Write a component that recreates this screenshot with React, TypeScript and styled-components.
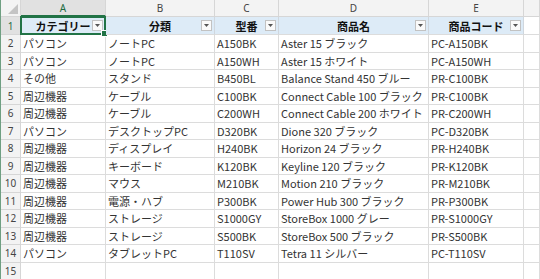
import styled, { createGlobalStyle } from 'styled-components';

const GlobalStyle = createGlobalStyle`
  html, body {
    margin: 0;
    padding: 0;
    background: #ffffff;
    overflow: hidden;
  }
`;

const columns = ['A', 'B', 'C', 'D', 'E', ''];
const headers = ['カテゴリー', '分類', '型番', '商品名', '商品コード'];

const rows: string[][] = [
  ['パソコン', 'ノートPC', 'A150BK', 'Aster 15 ブラック', 'PC-A150BK'],
  ['パソコン', 'ノートPC', 'A150WH', 'Aster 15 ホワイト', 'PC-A150WH'],
  ['その他', 'スタンド', 'B450BL', 'Balance Stand 450 ブルー', 'PR-C100BK'],
  ['周辺機器', 'ケーブル', 'C100BK', 'Connect Cable 100 ブラック', 'PR-C100BK'],
  ['周辺機器', 'ケーブル', 'C200WH', 'Connect Cable 200 ホワイト', 'PR-C200WH'],
  ['パソコン', 'デスクトップPC', 'D320BK', 'Dione 320 ブラック', 'PC-D320BK'],
  ['周辺機器', 'ディスプレイ', 'H240BK', 'Horizon 24 ブラック', 'PR-H240BK'],
  ['周辺機器', 'キーボード', 'K120BK', 'Keyline 120 ブラック', 'PR-K120BK'],
  ['周辺機器', 'マウス', 'M210BK', 'Motion 210 ブラック', 'PR-M210BK'],
  ['周辺機器', '電源・ハブ', 'P300BK', 'Power Hub 300 ブラック', 'PR-P300BK'],
  ['周辺機器', 'ストレージ', 'S1000GY', 'StoreBox 1000 グレー', 'PR-S1000GY'],
  ['周辺機器', 'ストレージ', 'S500BK', 'StoreBox 500 ブラック', 'PR-S500BK'],
  ['パソコン', 'タブレットPC', 'T110SV', 'Tetra 11 シルバー', 'PC-T110SV'],
  ['', '', '', '', ''],
];

const App = () => {
  return (
    <>
      <GlobalStyle />
      <Sheet>
        <Corner>
          <CornerMark />
        </Corner>
        {columns.map((c, i) => (
          <ColHeader key={`col-${i}`} active={i === 0}>
            {c}
          </ColHeader>
        ))}

        <RowHeader active>1</RowHeader>
        {headers.map((h, i) => (
          <TitleCell key={`h-${i}`}>
            {h}
            <FilterButton>
              <svg width="5" height="3" viewBox="0 0 5 3">
                <path d="M0 0 H5 L2.5 3 Z" fill="#555" />
              </svg>
            </FilterButton>
            {i === 0 && (
              <Selection>
                <Handle />
              </Selection>
            )}
          </TitleCell>
        ))}
        <Cell />

        {rows.map((r, ri) => (
          <Row key={`r-${ri}`}>
            <RowHeader>{ri + 2}</RowHeader>
            {r.map((v, ci) => (
              <Cell key={`c-${ri}-${ci}`}>{v}</Cell>
            ))}
            <Cell />
          </Row>
        ))}
      </Sheet>
    </>
  );
};

export default App;

const Sheet = styled.div`
  display: grid;
  grid-template-columns: 20px 85px 109px 64px 150px 95px 1fr;
  grid-template-rows: 17px 18px repeat(14, 17.5px);
  width: 540px;
  height: 279px;
  box-sizing: border-box;
  border-left: 1px solid #6f9f82;
  overflow: hidden;
  font-family: 'Noto Sans CJK JP', 'Noto Sans', sans-serif;
`;

const Row = styled.div`
  display: contents;
`;

const Corner = styled.div`
  position: relative;
  background: #f3f3f3;
  border-right: 1px solid #d6d6d6;
  border-bottom: 1px solid #d6d6d6;
  box-sizing: border-box;
`;

const CornerMark = styled.div`
  position: absolute;
  right: 2px;
  bottom: 2px;
  width: 0;
  height: 0;
  border-left: 10px solid transparent;
  border-bottom: 10px solid #c4c4c4;
`;

const ColHeader = styled.div<{ active?: boolean }>`
  display: flex;
  align-items: center;
  justify-content: center;
  box-sizing: border-box;
  background: ${({ active }) => (active ? '#e1e1e1' : '#f3f3f3')};
  color: ${({ active }) => (active ? '#1e6b41' : '#444444')};
  border-right: 1px solid #d6d6d6;
  border-bottom: ${({ active }) =>
    active ? '2px solid #217346' : '1px solid #d6d6d6'};
  font-family: 'Noto Sans', sans-serif;
  font-size: 10px;
`;

const RowHeader = styled.div<{ active?: boolean }>`
  display: flex;
  align-items: center;
  justify-content: center;
  box-sizing: border-box;
  background: ${({ active }) => (active ? '#e1e1e1' : '#f3f3f3')};
  color: ${({ active }) => (active ? '#1e6b41' : '#444444')};
  border-right: 1px solid #d6d6d6;
  border-bottom: 1px solid #d6d6d6;
  font-family: 'Noto Sans', sans-serif;
  font-size: 10px;
`;

const Cell = styled.div`
  display: flex;
  align-items: center;
  box-sizing: border-box;
  padding: 0 2px;
  border-right: 1px solid #dcdcdc;
  border-bottom: 1px solid #dcdcdc;
  color: #333333;
  font-size: 11px;
  white-space: nowrap;
  overflow: hidden;
`;

const TitleCell = styled.div`
  position: relative;
  display: flex;
  align-items: center;
  justify-content: center;
  box-sizing: border-box;
  background: #ddebf7;
  border-right: 1px solid #d0d7de;
  border-bottom: 1px solid #dcdcdc;
  color: #111111;
  font-size: 11px;
  font-weight: 700;
  white-space: nowrap;
`;

const FilterButton = styled.div`
  position: absolute;
  right: 2px;
  top: 3px;
  width: 11px;
  height: 11px;
  box-sizing: border-box;
  display: flex;
  align-items: center;
  justify-content: center;
  background: #fafafa;
  border: 1px solid #c2c2c2;
`;

const Selection = styled.div`
  position: absolute;
  left: -1px;
  top: -1px;
  right: -1px;
  bottom: -1px;
  border: 2px solid #217346;
  pointer-events: none;
`;

const Handle = styled.div`
  position: absolute;
  right: -4px;
  bottom: -4px;
  width: 5px;
  height: 5px;
  background: #217346;
  border: 1px solid #ffffff;
`;
